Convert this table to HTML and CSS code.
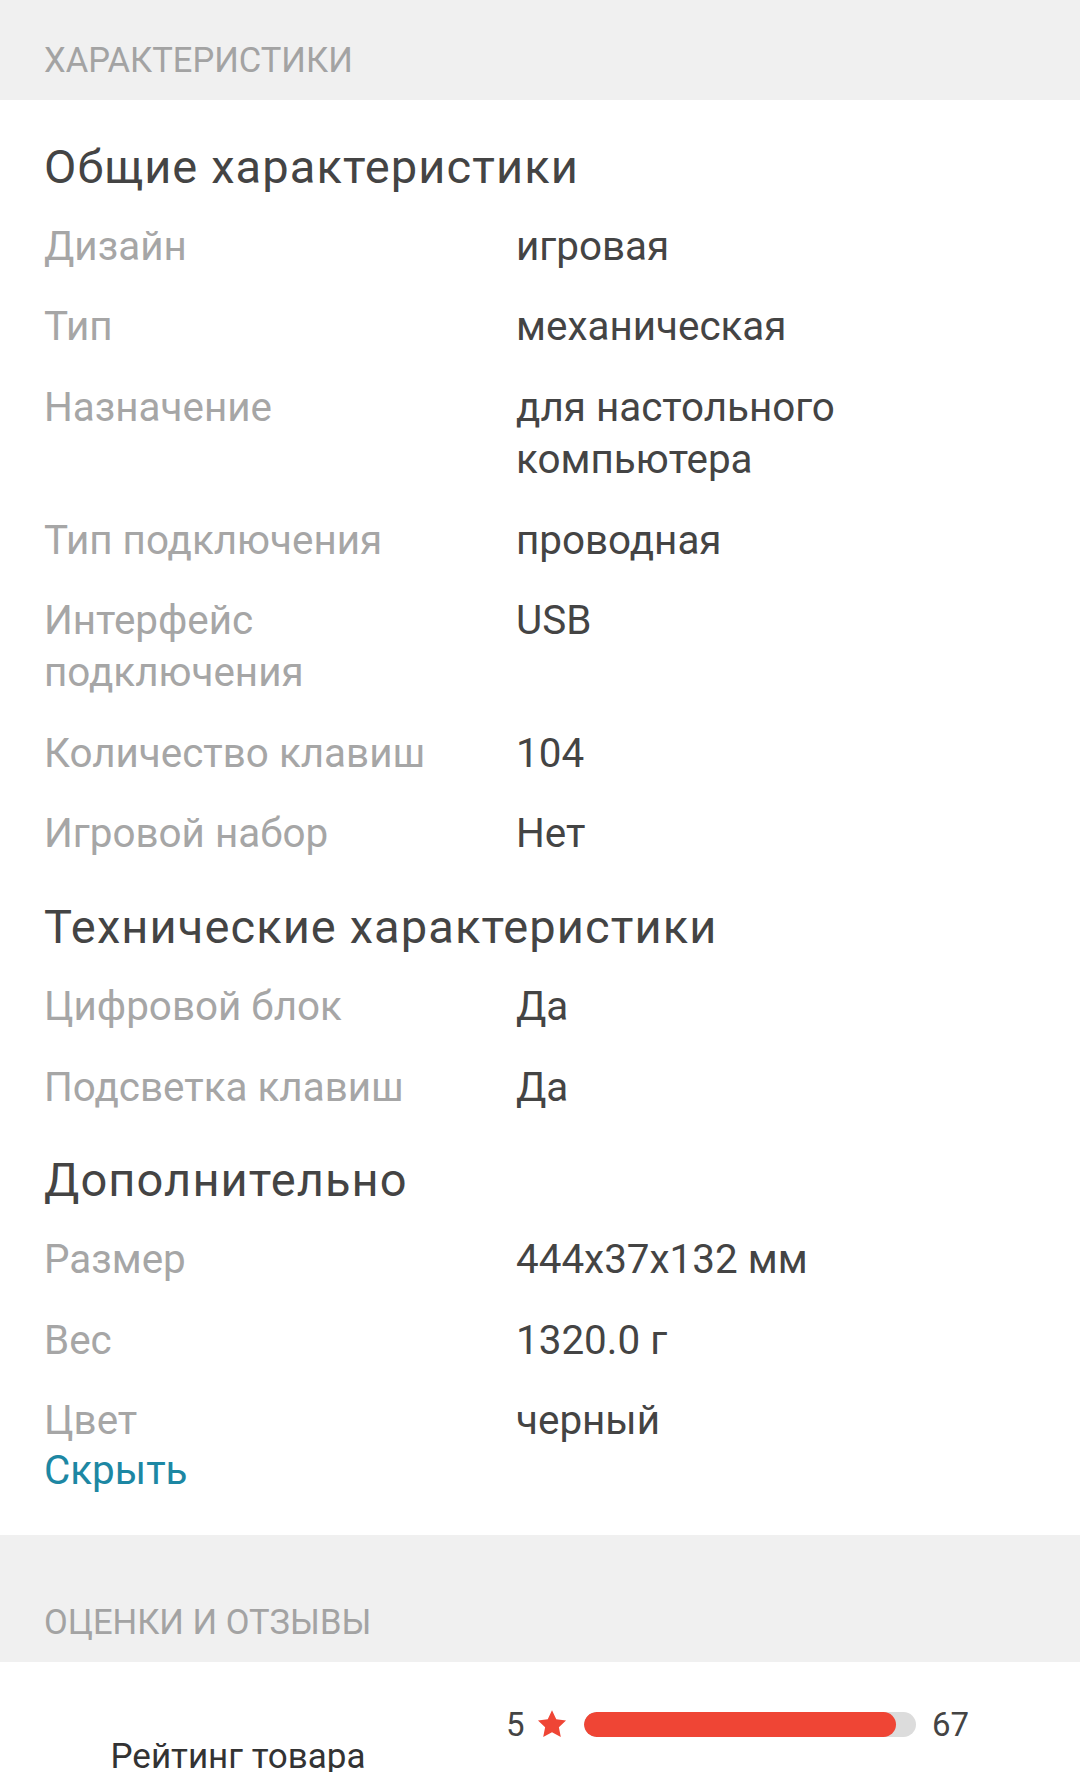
FILE: index.html
```html
<!DOCTYPE html>
<html lang="ru">
<head>
<meta charset="utf-8">
<title>Характеристики</title>
<link rel="stylesheet" href="styles.css">
</head>
<body>
<div class="section-header">ХАРАКТЕРИСТИКИ</div>
<div class="specs">
  <div class="group">
    <h2 class="group-title">Общие характеристики</h2>
    <div class="row"><div class="label">Дизайн</div><div class="value">игровая</div></div>
    <div class="row"><div class="label">Тип</div><div class="value">механическая</div></div>
    <div class="row"><div class="label">Назначение</div><div class="value">для настольного компьютера</div></div>
    <div class="row"><div class="label">Тип подключения</div><div class="value">проводная</div></div>
    <div class="row"><div class="label">Интерфейс подключения</div><div class="value">USB</div></div>
    <div class="row"><div class="label">Количество клавиш</div><div class="value">104</div></div>
    <div class="row"><div class="label">Игровой набор</div><div class="value">Нет</div></div>
  </div>
  <div class="group">
    <h2 class="group-title">Технические характеристики</h2>
    <div class="row"><div class="label">Цифровой блок</div><div class="value">Да</div></div>
    <div class="row"><div class="label">Подсветка клавиш</div><div class="value">Да</div></div>
  </div>
  <div class="group">
    <h2 class="group-title">Дополнительно</h2>
    <div class="row"><div class="label">Размер</div><div class="value">444x37x132 мм</div></div>
    <div class="row"><div class="label">Вес</div><div class="value">1320.0 г</div></div>
    <div class="row row-last"><div class="label">Цвет</div><div class="value">черный</div></div>
  </div>
  <a class="toggle" href="#">Скрыть</a>
</div>
<div class="section-header section-header-spaced">ОЦЕНКИ И ОТЗЫВЫ</div>
<div class="ratings">
  <div class="rating-summary">Рейтинг товара</div>
  <div class="rating-bars">
    <div class="bar-row">
      <span class="bar-num">5</span>
      <svg class="bar-star" viewBox="0 0 24 24" width="34" height="33"><path d="M12 1.6l3.1 6.6 7.1.9-5.2 4.9 1.4 7.1L12 17.6l-6.4 3.5L7 14l-5.2-4.9 7.1-.9z" fill="#ef4535"/></svg>
      <div class="bar-track"><div class="bar-fill" style="width:94%"></div></div>
      <span class="bar-count">67</span>
    </div>
  </div>
</div>
</body>
</html>
```

FILE: styles.css
```css
html, body {
  margin: 0;
  padding: 0;
  background: #ffffff;
  font-family: Roboto, "Noto Sans", "Liberation Sans", sans-serif;
}

.section-header {
  background: #f0f0f0;
  color: #a3a3a3;
  font-size: 34.5px;
  line-height: 80px;
  padding: 20px 44px 0;
  height: 80px;
}

.section-header-spaced {
  padding-top: 47px;
}

.specs {
  padding: 36.6px 44px 38px;
}

.group + .group {
  margin-top: 22px;
}

.group-title {
  margin: 0 0 10px;
  font-size: 47px;
  letter-spacing: 1.1px;
  line-height: 60px;
  font-weight: 400;
  color: #444444;
}

.row {
  display: flex;
  padding: 14.3px 0;
  font-size: 40.4px;
  line-height: 52px;
}

.row-last {
  padding-bottom: 0;
}

.label {
  width: 472px;
  flex: none;
  color: #a6a6a6;
  padding-right: 20px;
  box-sizing: border-box;
}

.value {
  flex: 1;
  color: #444444;
}

.toggle {
  display: block;
  margin-top: -2px;
  font-size: 40.4px;
  line-height: 52px;
  color: #1d87a3;
  text-decoration: none;
}

.ratings {
  display: flex;
  align-items: flex-start;
}

.rating-summary {
  width: 476px;
  flex: none;
  text-align: center;
  padding-top: 73px;
  font-size: 35px;
  line-height: 44px;
  color: #333333;
}

.rating-bars {
  margin-left: 30px;
  padding-top: 42px;
}

.bar-row {
  display: flex;
  align-items: center;
  height: 40px;
  font-size: 33px;
  color: #444444;
}

.bar-num {
  width: 18px;
}

.bar-star {
  margin-left: 11px;
  display: block;
}

.bar-track {
  margin-left: 15px;
  width: 332px;
  height: 25px;
  border-radius: 13px;
  background: #dcdcdc;
  overflow: hidden;
}

.bar-fill {
  height: 100%;
  background: #ef4535;
  border-radius: 13px;
}

.bar-count {
  margin-left: 16px;
}
```
